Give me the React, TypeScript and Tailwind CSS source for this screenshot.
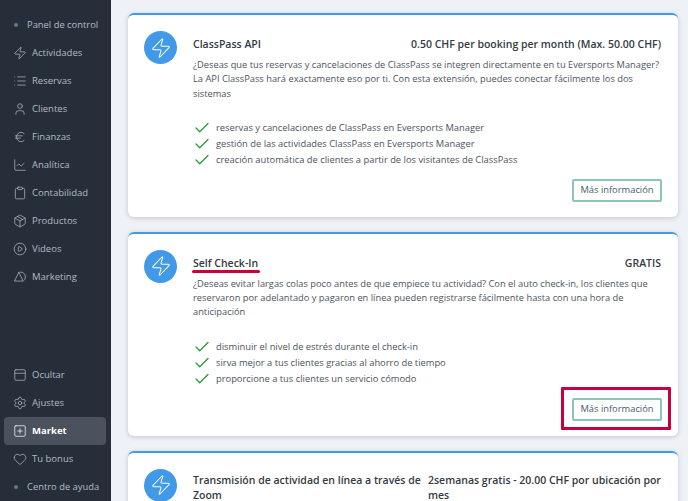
import { Zap, List, User, Euro, ChartLine, Clipboard, Package, CirclePlay, PanelTop, Settings, SquarePlus, Heart, Check } from 'lucide-react'
import type { LucideIcon } from 'lucide-react'

// triangle with a second arc behind it, lucide has no match for this one
function MarketingIcon({ size = 14, strokeWidth = 1.25, className }: { size?: number; strokeWidth?: number; className?: string }) {
  return (
    <svg width={size} height={size} viewBox="0 0 24 24" fill="none" stroke="currentColor" strokeWidth={strokeWidth} strokeLinejoin="round" strokeLinecap="round" className={className}>
      <path d="M10 4 2.5 19h15L10 4Z" />
      <path d="M12.5 3.5a8 8 0 0 1 8.5 10.5 8 8 0 0 1-2 3.5" />
    </svg>
  )
}

const TOP_NAV: { label: string; icon: LucideIcon | typeof MarketingIcon }[] = [
  { label: 'Actividades', icon: Zap },
  { label: 'Reservas', icon: List },
  { label: 'Clientes', icon: User },
  { label: 'Finanzas', icon: Euro },
  { label: 'Analítica', icon: ChartLine },
  { label: 'Contabilidad', icon: Clipboard },
  { label: 'Productos', icon: Package },
  { label: 'Videos', icon: CirclePlay },
  { label: 'Marketing', icon: MarketingIcon },
]

const BOTTOM_NAV: { label: string; icon: LucideIcon; active?: boolean }[] = [
  { label: 'Ocultar', icon: PanelTop },
  { label: 'Ajustes', icon: Settings },
  { label: 'Market', icon: SquarePlus, active: true },
  { label: 'Tu bonus', icon: Heart },
]

function NavItem({ label, icon: Icon, active }: { label: string; icon: LucideIcon | typeof MarketingIcon; active?: boolean }) {
  return (
    <div className={`flex items-center h-[28px] pl-[9px] ml-[4px] mr-[5px] rounded gap-[5px] text-[9.5px] ${active ? 'bg-[#4b525d] text-white font-bold' : 'text-[#b4bac3]'}`}>
      <Icon size={14} strokeWidth={1.25} className="shrink-0" />
      <span>{label}</span>
    </div>
  )
}

function Dot({ label }: { label: string }) {
  return (
    <div className="flex items-center h-[28px] pl-[14px] gap-[9px] text-[9.4px] text-[#b4bac3]">
      <span className="w-[4px] h-[4px] rounded-full bg-[#6f7680] shrink-0" />
      <span>{label}</span>
    </div>
  )
}

function Card({ title, price, desc, items, titleWide }: { title: string; price: string; desc: string; items: string[]; titleWide?: boolean }) {
  return (
    <div className="bg-white rounded-md border-t-2 border-[#4299e8] shadow-[0_1px_5px_rgba(0,0,0,0.18)] px-[16px] pt-[16px] pb-[15px] flex gap-[16px] shrink-0">
      <div className="w-[33px] h-[33px] rounded-full bg-[#4299e8] flex items-center justify-center shrink-0">
        <Zap size={22} strokeWidth={1.1} className="text-white" />
      </div>
      <div className="flex-1 min-w-0">
        <div className={`flex justify-between text-[10.5px] font-semibold text-[#333a44] pr-[1px] ${titleWide ? 'leading-[15px] pt-[4px]' : 'leading-[16px] pt-[5px]'}`}>
          <span className={titleWide ? 'w-[235px] shrink-0' : ''}>{title}</span>
          <span className={titleWide ? 'flex-1' : ''}>{price}</span>
        </div>
        <p className="mt-[6px] text-[9.3px] leading-[14.3px] text-[#4d545e]">{desc}</p>
        <ul className="mt-[19px] flex flex-col">
          {items.map((item) => (
            <li key={item} className="flex items-center h-[16px] gap-[5px] text-[9.35px] text-[#4d545e]">
              <Check size={18} strokeWidth={1.75} className="text-[#2b9a3f] shrink-0" />
              <span>{item}</span>
            </li>
          ))}
        </ul>
        <div className="flex justify-end mt-[11px]">
          <button className="w-[90px] h-[23px] rounded-[2px] border-2 border-[#8cc4ba] text-[9.35px] text-[#46606a] bg-white">Más información</button>
        </div>
      </div>
    </div>
  )
}

export default function App() {
  return (
    <div className="relative flex h-[501px] w-[688px] overflow-hidden bg-[#eef1f6] font-['Open_Sans',sans-serif]">
      <aside className="w-[111px] shrink-0 bg-[#262e3a] flex flex-col justify-between pt-[11px]">
        <div>
          <Dot label="Panel de control" />
          {TOP_NAV.map((n) => (
            <NavItem key={n.label} {...n} />
          ))}
        </div>
        <div>
          {BOTTOM_NAV.map((n) => (
            <NavItem key={n.label} {...n} />
          ))}
          <Dot label="Centro de ayuda" />
        </div>
      </aside>
      <main className="flex-1 min-w-0 pl-[17px] pr-[10px] pt-[13px] flex flex-col gap-[15px]">
        <Card
          title="ClassPass API"
          price="0.50 CHF per booking per month (Max. 50.00 CHF)"
          desc="¿Deseas que tus reservas y cancelaciones de ClassPass se integren directamente en tu Eversports Manager? La API ClassPass hará exactamente eso por ti. Con esta extensión, puedes conectar fácilmente los dos sistemas"
          items={['reservas y cancelaciones de ClassPass en Eversports Manager', 'gestión de las actividades ClassPass en Eversports Manager', 'creación automática de clientes a partir de los visitantes de ClassPass']}
        />
        <Card
          title="Self Check-In"
          price="GRATIS"
          desc="¿Deseas evitar largas colas poco antes de que empiece tu actividad? Con el auto check-in, los clientes que reservaron por adelantado y pagaron en línea pueden registrarse fácilmente hasta con una hora de anticipación"
          items={['disminuir el nivel de estrés durante el check-in', 'sirva mejor a tus clientes gracias al ahorro de tiempo', 'proporcione a tus clientes un servicio cómodo']}
        />
        <Card
          titleWide
          title="Transmisión de actividad en línea a través de Zoom"
          price="2semanas gratis - 20.00 CHF por ubicación por mes"
          desc=""
          items={[]}
        />
      </main>
      <div className="absolute left-[192px] top-[270px] w-[68px] h-[3px] rounded-full bg-[#c8003c]" />
      <div className="absolute left-[561px] top-[387px] w-[110px] h-[43px] border-[3px] border-[#c8003c] rounded-[1px]" />
    </div>
  )
}
